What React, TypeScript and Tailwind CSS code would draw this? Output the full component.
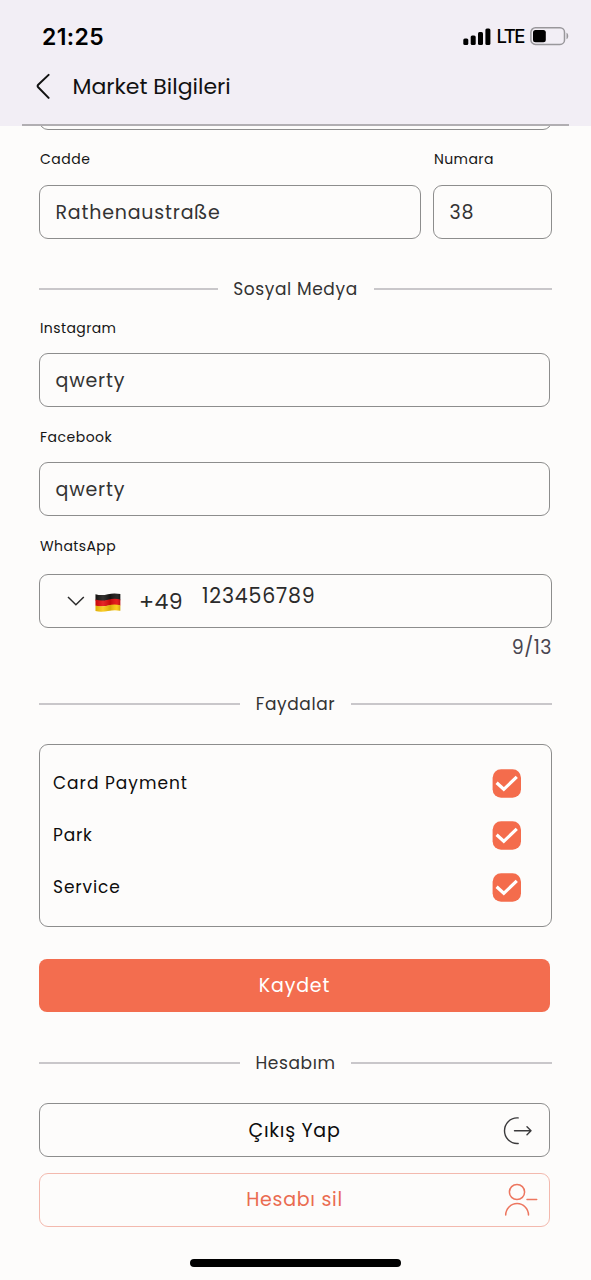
import type { ReactNode } from 'react';

function Label({ children, className }: { children: ReactNode; className: string }) {
  return <div className={`h-5 whitespace-nowrap pl-px text-[14px] leading-5 text-[#151515] ${className}`}>{children}</div>;
}

function Field({ children, className }: { children: ReactNode; className: string }) {
  return (
    <div className={`flex h-[54px] items-center whitespace-nowrap rounded-[9px] border border-[#8d8d8d] pl-[15.5px] pt-[2px] text-[19px] text-[#333333] ${className}`}>
      {children}
    </div>
  );
}

function Divider({ children, className }: { children: ReactNode; className: string }) {
  return (
    <div className="flex h-6 w-[513px] items-center gap-4">
      <div className="h-[1.5px] flex-1 bg-[#c9c7ca]" />
      <div className={`flex justify-center whitespace-nowrap text-[17px] leading-6 text-[#333333] ${className}`}>{children}</div>
      <div className="h-[1.5px] flex-1 bg-[#c9c7ca]" />
    </div>
  );
}

function CheckRow({ children, className }: { children: ReactNode; className: string }) {
  return (
    <div className="flex h-[52px] items-center justify-between">
      <span className={`pt-[2px] text-[17px] text-[#0d0d0d] ${className}`}>{children}</span>
      <svg width="29" height="29" viewBox="0 0 29 29">
        <rect x="0.6" y="0.2" width="28.4" height="28.6" rx="8.5" fill="#f46c4c" />
        <path d="M4.6 13.8 11.8 20.3 24.8 7.9" fill="none" stroke="#fff" strokeWidth="3.2" />
      </svg>
    </div>
  );
}

function Flag() {
  return (
    <svg width="26" height="19" viewBox="0 0 26 19">
      <defs>
        <linearGradient id="flag-shade" x1="0" x2="1" y1="0" y2="0">
          <stop offset="0" stopColor="#000" stopOpacity="0.12" />
          <stop offset="0.3" stopColor="#fff" stopOpacity="0.12" />
          <stop offset="0.6" stopColor="#000" stopOpacity="0.14" />
          <stop offset="0.85" stopColor="#fff" stopOpacity="0.08" />
          <stop offset="1" stopColor="#000" stopOpacity="0.2" />
        </linearGradient>
      </defs>
      <path d="M.5 1.2C5 2.6 9 2.2 13 1.2S21 .1 25.3 1v6.3c-4.3-.9-8.3-.7-12.3.2S5 8.9.5 7.4z" fill="#191614" />
      <path d="M.5 6.6c4.5 1.5 8.5 1.1 12.5.1s8-1.2 12.3-.2v6c-4.3-.9-8.3-.7-12.3.2S5 14.1.5 12.7z" fill="#e3090b" />
      <path d="M.5 12.4c4.5 1.5 8.5 1 12.5 0s8-1.1 12.3-.2v5.6c-4.3-.9-8.3-.6-12.3.2S5 19.3.5 18z" fill="#fbc70a" />
      <path d="M.5 1.2C5 2.6 9 2.2 13 1.2S21 .1 25.3 1v16.8c-4.3-.9-8.3-.6-12.3.2S5 19.3.5 18z" fill="url(#flag-shade)" />
    </svg>
  );
}

export default function App() {
  return (
    <div className="flex h-[1280px] w-[591px] flex-col overflow-hidden bg-[#fdfcfb] font-['Poppins','Inter',sans-serif] [font-feature-settings:'cv11']">
      <header className="h-[126px] shrink-0 bg-[#f2eef5] text-black">
        <div className="flex h-[62px] items-center justify-between pl-[42px] pr-[22px] pt-[11px]">
          <span className="pt-px font-['Inter',sans-serif] text-[23px] font-semibold tracking-[0.4px] [font-feature-settings:normal]">21:25</span>
          <div className="flex items-center">
            <svg width="28" height="18" viewBox="0 0 28 18" fill="#000">
              <rect x="0.3" y="10.5" width="5" height="6.5" rx="1.5" />
              <rect x="7.7" y="7.5" width="5" height="9.5" rx="1.5" />
              <rect x="15" y="4" width="5" height="13" rx="1.5" />
              <rect x="22.4" y="0.5" width="5" height="16.5" rx="1.5" />
            </svg>
            <span className="ml-[5.5px] w-[27.5px] whitespace-nowrap pt-px font-['Inter',sans-serif] text-[18.5px] font-medium tracking-[-1.5px]">LTE</span>
            <svg className="ml-[6px]" width="39" height="20" viewBox="0 0 39 20">
              <rect x="0.9" y="0.8" width="33.6" height="16.6" rx="4.5" fill="none" stroke="#99979b" strokeWidth="1.5" />
              <rect x="3" y="3" width="12.8" height="12.2" rx="2.5" fill="#000" />
              <path d="M36.500 5.800c2.300.8 2.300 5.600 0 6.400z" fill="#99979b" />
            </svg>
          </div>
        </div>
        <div className="flex h-[50px] items-center pl-[36px]">
          <svg width="16" height="28" viewBox="0 0 16 28" fill="none" stroke="#111" strokeWidth="2" strokeLinecap="round" strokeLinejoin="round">
            <path d="M12.6 1.9 2.2 11.8Q1.1 13 2.2 14.2L12.6 24.9" />
          </svg>
          <h1 className="ml-[20.5px] whitespace-nowrap pb-px text-[22px] font-normal text-[#111]">Market Bilgileri</h1>
        </div>
        <div className="mx-[22px] mt-[12px] h-[2px] bg-[#b1aeb2]" />
      </header>

      <main className="flex flex-col pl-[39px]">
        <div className="h-[4px] w-[513px] overflow-hidden">
          <div className="-mt-[50px] h-[54px] rounded-[9px] border border-[#8d8d8d]" />
        </div>
        <div className="mt-[19px] flex gap-3">
          <div className="w-[382px]">
            <Label className="tracking-[0.5px]">Cadde</Label>
            <Field className="mt-[16px] tracking-[0.8px]">Rathenaustraße</Field>
          </div>
          <div className="w-[119px]">
            <Label className="tracking-[0.4px]">Numara</Label>
            <Field className="mt-[16px] tracking-[0.8px]">38</Field>
          </div>
        </div>

        <div className="mt-[38px]"><Divider className="w-[124px] tracking-[0.6px]">Sosyal Medya</Divider></div>
        <Label className="mt-[17px] tracking-[0.4px]">Instagram</Label>
        <Field className="mt-[15px] w-[511px] tracking-[0.8px]">qwerty</Field>
        <Label className="mt-[20px] tracking-[0.5px]">Facebook</Label>
        <Field className="mt-[15px] w-[511px] tracking-[0.8px]">qwerty</Field>
        <Label className="mt-[20px] tracking-[0.4px]">WhatsApp</Label>
        <div className="mt-[18px] flex h-[54px] w-[513px] items-center whitespace-nowrap rounded-[9px] border border-[#8d8d8d] pl-[26px] text-[#2b2b2b]">
          <svg width="20" height="12" viewBox="0 0 20 12" fill="none" stroke="#2b2b2b" strokeWidth="1.5">
            <path d="M2 2 9.9 9.8 17.8 2" />
          </svg>
          <div className="ml-[8.5px] mt-[2px]"><Flag /></div>
          <span className="ml-[18.5px] w-[44px] text-[22px] tracking-[0.4px]">+49</span>
          <span className="-mt-[9px] ml-[19px] text-[20.5px] tracking-[0.8px]">123456789</span>
        </div>
        <div className="mt-[5px] flex h-7 w-[513px] items-center justify-end pt-[2px] text-[19px] tracking-[0.5px] text-[#49454f]">9/13</div>

        <div className="mt-[31px]"><Divider className="w-[79px] tracking-[0.6px]">Faydalar</Divider></div>
        <div className="mt-[28px] h-[183px] w-[513px] rounded-[9px] border border-[#8d8d8d] pl-[13px] pr-[30px] pt-[12px]">
          <CheckRow className="tracking-[1px]">Card Payment</CheckRow>
          <CheckRow className="tracking-[0.8px]">Park</CheckRow>
          <CheckRow className="tracking-[0.9px]">Service</CheckRow>
        </div>
        <button className="mt-[32px] h-[53px] w-[511px] rounded-[8px] bg-[#f36d4f] pt-[2px] text-[19px] tracking-[0.8px] text-white">Kaydet</button>

        <div className="mt-[39px]"><Divider className="w-[79px] tracking-[0.6px]">Hesabım</Divider></div>
        <button className="mt-[28px] flex h-[54px] w-[511px] items-center rounded-[9px] border border-[#8d8d8d] pr-[15px] text-[19px] text-[#0d0d0d]">
          <span className="w-[47px]" />
          <span className="flex-1 pt-[2px] tracking-[0.7px]">Çıkış Yap</span>
          <svg width="32" height="30" viewBox="0 0 32 30" fill="none" stroke="#3b3a3c" strokeWidth="1.4" strokeLinecap="round" strokeLinejoin="round">
            <path d="M16.2 2.9H15a12.5 12.8 0 0 0 0 25.6h1.2M12.5 15.7H29M25 11.7 29 15.7 25 19.7" />
          </svg>
        </button>
        <button className="mt-[16px] flex h-[54px] w-[511px] items-center rounded-[9px] border border-[#f3b9ae] pr-[10px] text-[19px] text-[#ea6b50]">
          <span className="w-[46px]" />
          <span className="flex-1 pt-[1px] tracking-[0.7px]">Hesabı sil</span>
          <svg width="36" height="36" viewBox="0 0 36 36" fill="none" stroke="#ed765f" strokeWidth="1.5" strokeLinecap="round">
            <circle cx="14" cy="10" r="7.6" />
            <path d="M2.7 33A11.4 11.4 0 0 1 25.5 33M24 17.5H33.7" />
          </svg>
        </button>
        <div className="ml-[151px] mt-[32px] h-[8px] w-[211px] rounded-full bg-black" />
      </main>
    </div>
  );
}
